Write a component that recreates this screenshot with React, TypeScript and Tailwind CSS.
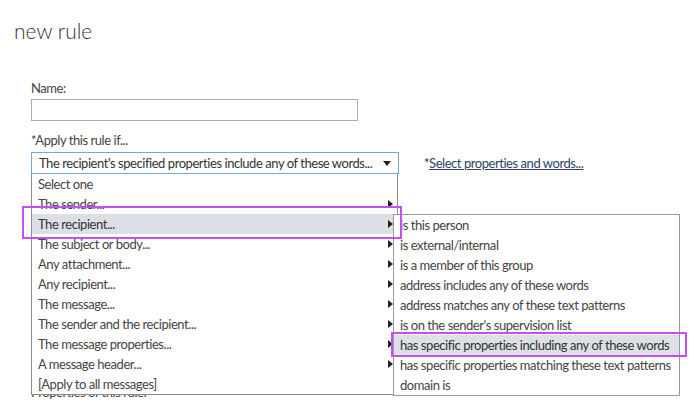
import React from 'react';

const MAIN_ITEMS: { label: string; arrow: boolean }[] = [
    { label: 'Select one', arrow: false },
    { label: 'The sender...', arrow: true },
    { label: 'The recipient...', arrow: true },
    { label: 'The subject or body...', arrow: true },
    { label: 'Any attachment...', arrow: true },
    { label: 'Any recipient...', arrow: true },
    { label: 'The message...', arrow: true },
    { label: 'The sender and the recipient...', arrow: true },
    { label: 'The message properties...', arrow: true },
    { label: 'A message header...', arrow: true },
    { label: '[Apply to all messages]', arrow: false },
];

const SUB_ITEMS = [
    'is this person',
    'is external/internal',
    'is a member of this group',
    'address includes any of these words',
    'address matches any of these text patterns',
    "is on the sender's supervision list",
    'has specific properties including any of these words',
    'has specific properties matching these text patterns',
    'domain is',
];

const RightArrow = () => (
    <svg width="5" height="8" viewBox="0 0 5 8" className="shrink-0">
        <polygon points="0,0 5,4 0,8" fill="#222" />
    </svg>
);

const App: React.FC = () => {
    return (
        <div className="relative w-[694px] h-[411px] overflow-hidden bg-white text-[#444] font-['Lato','Liberation_Sans',sans-serif]">
            {/* Title */}
            <div className="pl-[14px] pt-[19px] text-[21px] leading-[24px] font-light text-[#333]">new rule</div>

            {/* Form */}
            <div className="pl-[31px] mt-[37px] text-[13px] tracking-[-0.45px]">
                <div className="leading-[16px]">Name:</div>
                <div className="mt-[3px] w-[327px] h-[22px] border border-[#ababab] bg-white" />

                <div className="mt-[11px] leading-[16px]">*Apply this rule if...</div>
                <div className="mt-[4px] flex items-center">
                    <div className="w-[368px] h-[22px] border border-[#79a6d9] flex items-center justify-between pl-[7px] pr-[7px] text-[#333]">
                        <span className="leading-[16px] whitespace-nowrap">The recipient's specified properties include any of these words...</span>
                        <svg width="8" height="5" viewBox="0 0 8 5" className="shrink-0">
                            <polygon points="0,0 8,0 4,5" fill="#222" />
                        </svg>
                    </div>
                    <div className="ml-[25px] leading-[16px] text-[#333] whitespace-nowrap">
                        *<a href="#" className="underline text-[#2b4560]">Select properties and words...</a>
                    </div>
                </div>

                <div className="mt-[210px] leading-[16px]">Properties of this rule:</div>
            </div>

            {/* Dropdown list */}
            <div className="absolute left-[31px] top-[174px] w-[367px] border-x border-b border-[#8c8c8c] bg-white text-[13px] tracking-[-0.45px]">
                {MAIN_ITEMS.map((item, i) => (
                    <div
                        key={item.label}
                        className={
                            'h-[20px] flex items-center justify-between pl-[6px] pr-[4px] ' +
                            (i === 2 ? 'bg-[#dce0e5] text-[#333]' : '')
                        }
                    >
                        <span className="leading-[16px]">{item.label}</span>
                        {item.arrow && <RightArrow />}
                    </div>
                ))}
            </div>

            {/* Submenu */}
            <div className="absolute left-[393px] top-[214px] w-[287px] border border-[#9a9a9a] bg-white text-[13px] tracking-[-0.45px]">
                {SUB_ITEMS.map((item, i) => (
                    <div
                        key={item}
                        className={'h-[20px] flex items-center pl-[6px] ' + (i === 6 ? 'bg-[#dce0e5] text-[#333]' : '')}
                    >
                        <span className="leading-[16px] whitespace-nowrap">{item}</span>
                    </div>
                ))}
            </div>

            {/* Annotation boxes */}
            <div className="absolute left-[22px] top-[206px] w-[380px] h-[33px] border-2 border-[#c94ef2]" />
            <div className="absolute left-[391px] top-[332px] w-[296px] h-[25px] border-2 border-[#c94ef2]" />
        </div>
    );
};

export default App;
